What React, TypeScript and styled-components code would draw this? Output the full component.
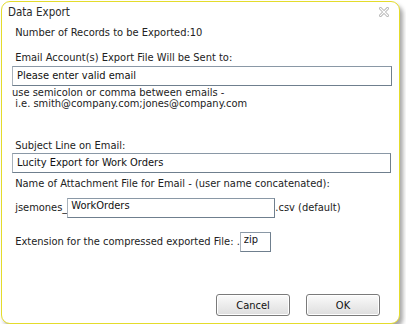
import React, { useState } from "react";
import styled, { createGlobalStyle } from "styled-components";

const Global = createGlobalStyle`
  html, body {
    margin: 0;
    padding: 0;
    background: #ffffff;
  }
  body {
    font-family: "DejaVu Sans Condensed", "DejaVu Sans", sans-serif;
    font-size: 11px;
    color: #222222;
  }
`;

const Page = styled.div(() => ({
  padding: "1px 0 0 1px",
}));

const Dialog = styled.div(() => ({
  width: "399px",
  height: "323px",
  boxSizing: "border-box",
  border: "1px solid #e4dc2c",
  borderRadius: "9px",
  background: "#ffffff",
  boxShadow: "3px 4px 4px rgba(0,0,0,0.35)",
  display: "flex",
  flexDirection: "column",
}));

const TitleBar = styled.div(() => ({
  height: "20px",
  display: "flex",
  alignItems: "center",
  justifyContent: "space-between",
  padding: "0 10px 0 6px",
  color: "#2a2a2a",
  fontSize: "11.5px",
}));

const CloseButton = styled.button(() => ({
  border: "none",
  background: "transparent",
  padding: 0,
  width: "10px",
  height: "10px",
  display: "flex",
  cursor: "pointer",
}));

const Body = styled.div(() => ({
  flex: 1,
  display: "flex",
  flexDirection: "column",
  padding: "0 8px 0 10px",
}));

const Line = styled.div<{ top?: number }>((props) => ({
  lineHeight: "12px",
  marginTop: `${props.top ?? 0}px`,
  whiteSpace: "nowrap",
}));

const Hint = styled.div(() => ({
  lineHeight: "11px",
  marginTop: "1px",
  whiteSpace: "pre",
}));

const TextBox = styled.input<{ w?: number; top?: number }>((props) => ({
  display: "block",
  boxSizing: "border-box",
  width: props.w ? `${props.w}px` : "380px",
  height: "20px",
  marginTop: `${props.top ?? 0}px`,
  padding: "0 4px 1px",
  border: "1px solid #a9b2bb",
  borderTopColor: "#8a98a6",
  borderRightColor: "#6f7f8e",
  borderBottomColor: "#6f7f8e",
  fontFamily: "inherit",
  fontSize: "11px",
  color: "#111111",
  outline: "none",
  background: "#ffffff",
}));

const InlineBox = styled(TextBox)(() => ({
  padding: "0 3px 6px",
}));

const Row = styled.div<{ top?: number }>((props) => ({
  display: "flex",
  alignItems: "center",
  marginTop: `${props.top ?? 0}px`,
  whiteSpace: "nowrap",
}));

const RowText = styled.span(() => ({
  lineHeight: "12px",
}));

const Buttons = styled.div(() => ({
  marginTop: "auto",
  marginBottom: "7px",
  display: "flex",
  justifyContent: "flex-end",
  gap: "16px",
  paddingRight: "11px",
}));

const Button = styled.button(() => ({
  width: "74px",
  height: "22px",
  boxSizing: "border-box",
  border: "1px solid #7a7a7a",
  borderRadius: "3px",
  background: "linear-gradient(#fbfbfb, #ececec 50%, #dedede)",
  boxShadow: "inset 0 0 0 1px #ffffff",
  fontFamily: "inherit",
  fontSize: "11px",
  color: "#111111",
  padding: 0,
  cursor: "pointer",
}));

function CloseIcon() {
  return (
    <svg width="10" height="10" viewBox="0 0 10 10">
      <path d="M1.5 1.5 L8.5 8.5 M8.5 1.5 L1.5 8.5" stroke="#b4b4b4" strokeWidth="3" strokeLinecap="square" />
      <path d="M1.5 1.5 L8.5 8.5 M8.5 1.5 L1.5 8.5" stroke="#ffffff" strokeWidth="1.2" strokeLinecap="square" />
    </svg>
  );
}

export default function App(): JSX.Element {
  const [email, setEmail] = useState("Please enter valid email");
  const [subject, setSubject] = useState("Lucity Export for Work Orders");
  const [file, setFile] = useState("WorkOrders");
  const [ext, setExt] = useState("zip");

  return (
    <Page>
      <Global />
      <Dialog>
        <TitleBar>
          <span>Data Export</span>
          <CloseButton aria-label="close">
            <CloseIcon />
          </CloseButton>
        </TitleBar>
        <Body>
          <Line top={5}>&nbsp;Number of Records to be Exported:10</Line>
          <Line top={13}>&nbsp;Email Account(s) Export File Will be Sent to:</Line>
          <TextBox top={2} value={email} onChange={(e) => setEmail(e.target.value)} />
          <Hint>
            {"use semicolon or comma between emails -\n i.e. smith@company.com;jones@company.com"}
          </Hint>
          <Line top={31}>&nbsp;Subject Line on Email:</Line>
          <TextBox top={1} w={379} value={subject} onChange={(e) => setSubject(e.target.value)} />
          <Line top={5}>&nbsp;Name of Attachment File for Email - (user name concatenated):</Line>
          <Row top={8}>
            <RowText>&nbsp;jsemones_</RowText>
            <InlineBox w={208} value={file} onChange={(e) => setFile(e.target.value)} />
            <RowText>.csv (default)</RowText>
          </Row>
          <Row top={14}>
            <RowText>&nbsp;Extension for the compressed exported File: .</RowText>
            <InlineBox w={31} value={ext} onChange={(e) => setExt(e.target.value)} />
          </Row>
          <Buttons>
            <Button>Cancel</Button>
            <Button>OK</Button>
          </Buttons>
        </Body>
      </Dialog>
    </Page>
  );
}
